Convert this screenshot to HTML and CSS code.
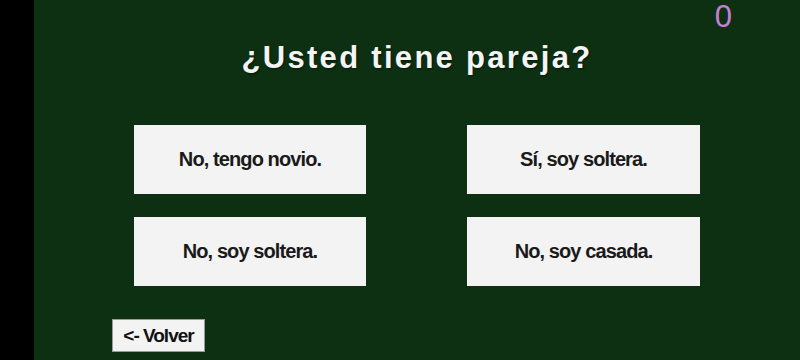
FILE: index.html
```html
<!DOCTYPE html>
<html lang="es">
<head>
    <meta charset="UTF-8">
    <meta name="viewport" content="width=device-width, initial-scale=1.0">
    <title>Pregunta</title>
    <link rel="stylesheet" href="styles.css">
</head>
<body>
    <div class="layout">
        <!-- Franja lateral -->
        <div class="sidebar"></div>

        <!-- Contenido del juego -->
        <div class="main">
            <div class="score">0</div>
            <h1 class="question">¿Usted tiene pareja?</h1>

            <div class="answers">
                <button class="answer">No, tengo novio.</button>
                <button class="answer">Sí, soy soltera.</button>
                <button class="answer">No, soy soltera.</button>
                <button class="answer">No, soy casada.</button>
            </div>

            <button class="back-button">&lt;- Volver</button>
        </div>
    </div>
</body>
</html>
```

FILE: styles.css
```css
body {
    margin: 0;
    padding: 0;
    font-family: 'Liberation Sans', Arial, sans-serif;
    background: #000;
}

.layout {
    display: flex;
    height: 360px;
}

/* Franja negra de la izquierda */
.sidebar {
    width: 34px;
    background: #000;
}

.main {
    flex: 1;
    position: relative;
    background: #0c3011;
    padding-top: 39px;
    box-sizing: border-box;
}

.score {
    position: absolute;
    top: 0;
    right: 68px;
    font-size: 31px;
    line-height: 34px;
    color: #c67fd8;
}

.question {
    margin: 0;
    text-align: center;
    font-size: 31px;
    line-height: 37px;
    font-weight: bold;
    letter-spacing: 2.3px;
    color: #f4f4f4;
    text-shadow: 1px 1px 2px rgba(0, 0, 0, 0.5);
}

/* Respuestas */
.answers {
    display: grid;
    grid-template-columns: 232px 233px;
    grid-auto-rows: 69px;
    column-gap: 101px;
    row-gap: 23px;
    justify-content: center;
    margin-top: 49px;
}

.answer {
    background: #f3f3f3;
    border: none;
    border-radius: 0;
    font-family: 'Liberation Sans', Arial, sans-serif;
    font-size: 20px;
    font-weight: bold;
    letter-spacing: -0.9px;
    color: #1a1a1a;
    padding: 0;
    cursor: pointer;
}

.back-button {
    display: block;
    margin: 33px 0 0 78px;
    height: 33px;
    width: 93px;
    padding: 0;
    background: #f3f3f3;
    border: 1px solid #9a9a9a;
    font-family: 'Liberation Sans', Arial, sans-serif;
    font-size: 19px;
    font-weight: bold;
    letter-spacing: -1px;
    color: #111;
    cursor: pointer;
}
```
